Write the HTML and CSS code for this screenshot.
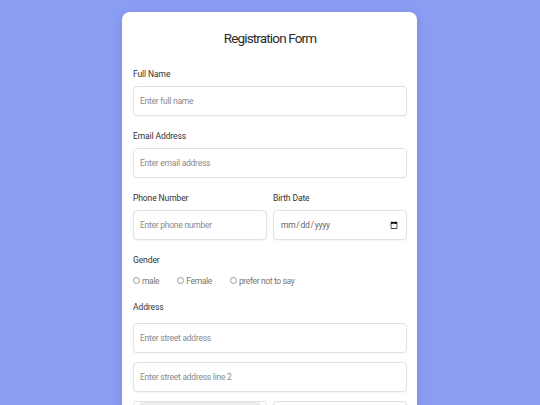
FILE: index.html
```html
<!DOCTYPE html>
<html>
<head>
<meta charset="utf-8">
<link rel="stylesheet" href="styles.css">
</head>
<body>
<div class="card">
  <h1 class="title">Registration Form</h1>
  <div class="group">
    <label class="label">Full Name</label>
    <input class="input" type="text" placeholder="Enter full name">
  </div>
  <div class="group">
    <label class="label">Email Address</label>
    <input class="input" type="text" placeholder="Enter email address">
  </div>
  <div class="row group phone-row">
    <div class="col">
      <label class="label">Phone Number</label>
      <input class="input" type="text" placeholder="Enter phone number">
    </div>
    <div class="col">
      <label class="label">Birth Date</label>
      <input class="input date" type="date">
    </div>
  </div>
  <div class="gender">
    <label class="label">Gender</label>
    <div class="radios">
      <span class="radio"><span class="circle"></span>male</span>
      <span class="radio"><span class="circle"></span>Female</span>
      <span class="radio"><span class="circle"></span>prefer not to say</span>
    </div>
  </div>
  <div class="address">
    <label class="label addr-label">Address</label>
    <input class="input stack" type="text" placeholder="Enter street address">
    <input class="input stack" type="text" placeholder="Enter street address line 2">
    <div class="row">
      <div class="col">
        <div class="select"><div class="select-inner"></div></div>
      </div>
      <div class="col">
        <input class="input" type="text" placeholder="">
      </div>
    </div>
  </div>
</div>
</body>
</html>
```

FILE: styles.css
```css
html, body {
  margin: 0;
  padding: 0;
}
body {
  background: #8b9cf3;
  font-family: Roboto, "Liberation Sans", sans-serif;
  height: 405px;
  overflow: hidden;
}
.card {
  width: 295px;
  margin: 12px 0 0 122px;
  background: #ffffff;
  border-radius: 8px;
  padding: 16px 10px 40px 11px;
  box-sizing: border-box;
  box-shadow: 0 2px 8px rgba(40, 50, 120, 0.15);
}
.title {
  margin: 0 0 20px;
  font-size: 13.5px;
  line-height: 20px;
  font-weight: 400;
  color: #2b2b2b;
  text-align: center;
  letter-spacing: -0.85px;
}
.group {
  margin-bottom: 13.5px;
}
.phone-row {
  margin-top: 14.5px;
}
.label {
  display: block;
  font-size: 8.5px;
  line-height: 12px;
  color: #333;
  margin-bottom: 6px;
  letter-spacing: -0.1px;
}
.input {
  display: block;
  width: 100%;
  height: 30px;
  box-sizing: border-box;
  border: 1px solid #e2e2e2;
  border-radius: 4px;
  padding: 0 6px;
  font-family: Roboto, "Liberation Sans", sans-serif;
  font-size: 8.5px;
  color: #888;
  background: #fff;
  box-shadow: 0 1px 2px rgba(0, 0, 0, 0.04);
  outline: none;
  letter-spacing: -0.25px;
}
.input::placeholder {
  color: #8a8a8a;
}
.date {
  color: #666;
  font-size: 8.5px;
  letter-spacing: -0.3px;
}
.row {
  display: flex;
  gap: 6px;
}
.col {
  flex: 1;
  min-width: 0;
}
.gender .label {
  margin-bottom: 6px;
}
.radios {
  display: flex;
  height: 18px;
  align-items: center;
  gap: 18px;
  font-size: 8.5px;
  color: #777;
  letter-spacing: -0.35px;
}
.radio {
  display: flex;
  align-items: center;
  gap: 2px;
}
.circle {
  width: 5px;
  height: 5px;
  border: 1px solid #999;
  border-radius: 50%;
}
.address {
  margin-top: 11px;
}
.addr-label {
  margin-bottom: 10px;
}
.stack {
  margin-bottom: 9px;
}
.select {
  height: 30px;
  border: 1px solid #e2e2e2;
  border-radius: 4px;
  box-sizing: border-box;
  padding: 0 6px;
}
.select-inner {
  height: 22px;
  background: #ececec;
  border-radius: 2px;
}
```
